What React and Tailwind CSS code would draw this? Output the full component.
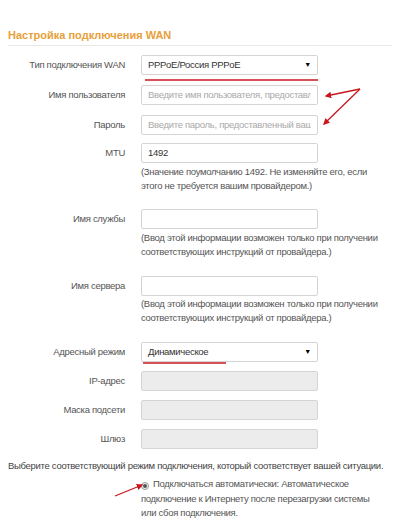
import React from "react";

const font = { fontFamily: '"Liberation Sans", Arial, sans-serif' };

function Label({ children }) {
	return <div className="w-[117px] shrink-0 text-right text-[9.5px] tracking-[-0.3px] text-[#555]">{children}</div>;
}

function Field({ label, className = "", children }) {
	return (
		<div className={"flex items-center gap-[16px] " + className}>
			<Label>{label}</Label>
			{children}
		</div>
	);
}

function Box({ value, placeholder, disabled, select }) {
	return (
		<div
			className={
				"flex h-[20px] w-[177px] items-center justify-between overflow-hidden rounded-[2px] border border-[#d4d4d4] px-[6px] text-[9.5px] tracking-[-0.3px] " +
				(disabled ? "bg-[#ececec]" : "bg-white")
			}
		>
			{value ? (
				<span className="text-[#333]">{value}</span>
			) : (
				<span className="overflow-hidden whitespace-nowrap text-[#a9a9a9]">{placeholder}</span>
			)}
			{select && <span className="text-[7px] text-black">▼</span>}
		</div>
	);
}

function Hint({ className = "", children }) {
	return (
		<div className={"ml-[133px] w-[242px] text-[9.5px] leading-[14px] tracking-[-0.3px] text-[#555] " + className}>
			{children}
		</div>
	);
}

export default function App() {
	return (
		<div className="relative h-[524px] w-[400px] overflow-hidden bg-white px-[8px]" style={font}>
			<div className="border-b border-[#e8e8e8] pt-[28px] pb-[3px] text-[11px] leading-[14px] font-bold text-[#e8a03c]">
				Настройка подключения WAN
			</div>

			<Field label="Тип подключения WAN" className="mt-[9px]">
				<Box value="PPPoE/Россия PPPoE" select />
			</Field>
			<Field label="Имя пользователя" className="mt-[10px]">
				<Box placeholder="Введите имя пользователя, предоставленный вашим провайдером" />
			</Field>
			<Field label="Пароль" className="mt-[10px]">
				<Box placeholder="Введите пароль, предоставленный вашим провайдером" />
			</Field>

			<Field label="MTU" className="mt-[8px]">
				<Box value="1492" />
			</Field>
			<Hint className="mt-[2px]">
				(Значение поумолчанию 1492. Не изменяйте его, если этого не требуется вашим провайдером.)
			</Hint>

			<Field label="Имя службы" className="mt-[16px]">
				<Box />
			</Field>
			<Hint className="mt-[2px]">
				(Ввод этой информации возможен только при получении соответствующих инструкций от провайдера.)
			</Hint>

			<Field label="Имя сервера" className="mt-[17px]">
				<Box />
			</Field>
			<Hint className="mt-[1px]">
				(Ввод этой информации возможен только при получении соответствующих инструкций от провайдера.)
			</Hint>

			<Field label="Адресный режим" className="mt-[17px]">
				<Box value="Динамическое" select />
			</Field>
			<Field label="IP-адрес" className="mt-[9px]">
				<Box disabled />
			</Field>
			<Field label="Маска подсети" className="mt-[9px]">
				<Box disabled />
			</Field>
			<Field label="Шлюз" className="mt-[9px]">
				<Box disabled />
			</Field>

			<div className="mt-[10px] whitespace-nowrap text-[9.5px] leading-[14px] tracking-[-0.3px] text-[#444]">
				Выберите соответствующий режим подключения, который соответствует вашей ситуации.
			</div>
			<div className="mt-[4px] ml-[133px] w-[232px] text-[9.5px] leading-[14.5px] tracking-[-0.3px] text-[#555]">
				<span className="mr-[4px] inline-flex h-[8px] w-[8px] items-center justify-center rounded-full border border-[#999] bg-[#f4f4f4] align-[-1px]">
					<span className="h-[4px] w-[4px] rounded-full bg-[#555]" />
				</span>
				Подключаться автоматически: Автоматическое подключение к Интернету после перезагрузки системы или сбоя подключения.
			</div>

			{/* red annotation marks */}
			<svg className="pointer-events-none absolute top-0 left-0" width="400" height="524" viewBox="0 0 400 524">
				<defs>
					<marker id="ah" viewBox="0 0 10 10" refX="8" refY="5" markerWidth="5" markerHeight="5" orient="auto-start-reverse">
						<path d="M0 0 L10 5 L0 10 z" fill="#c8161d" />
					</marker>
				</defs>
				<line x1="145" y1="80" x2="318" y2="80" stroke="#c8161d" strokeWidth="1.6" />
				<line x1="143" y1="363" x2="226" y2="363" stroke="#c8161d" strokeWidth="1.6" />
				<line x1="360" y1="89" x2="326" y2="96" stroke="#c8161d" strokeWidth="1.3" markerEnd="url(#ah)" />
				<line x1="360" y1="89" x2="324" y2="124" stroke="#c8161d" strokeWidth="1.3" markerEnd="url(#ah)" />
				<line x1="115" y1="496" x2="142" y2="485" stroke="#c8161d" strokeWidth="1.3" markerEnd="url(#ah)" />
			</svg>
		</div>
	);
}
